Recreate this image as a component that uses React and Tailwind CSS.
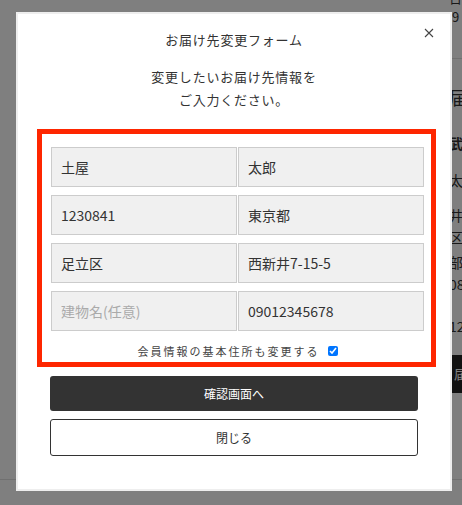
import { useState } from "react";

const fields = [
  { id: "last", value: "土屋" },
  { id: "first", value: "太郎" },
  { id: "zip", value: "1230841" },
  { id: "pref", value: "東京都" },
  { id: "city", value: "足立区" },
  { id: "street", value: "西新井7-15-5" },
  { id: "building", value: "", placeholder: "建物名(任意)" },
  { id: "tel", value: "09012345678" },
];

const BackgroundPage = () => {
  return (
    <div className="flex flex-col">
      <div className="flex flex-col pl-[449px] text-[14px] text-[#333] whitespace-nowrap">
        <p className="-mt-[10px] leading-4 text-[13px]">日本</p>
        <p className="mt-[3px] leading-4 text-[13px]">&nbsp;9</p>
        <div className="mt-[33px] border-t border-[#e0e0e0]" />
        <p className="mt-[26px] text-lg leading-6">届け先</p>
        <p className="mt-6 font-bold leading-5">武次</p>
        <p className="mt-[17px] leading-5">太郎</p>
        <p className="mt-[15px] leading-5">井7</p>
        <p className="mt-[2px] leading-5">区</p>
        <p className="mt-[5px] leading-5">部</p>
        <p className="mt-[2px] leading-5">08</p>
        <p className="mt-[22px] leading-5">12</p>
        <div className="mt-[19px] flex h-[38px] items-center bg-[#222] pl-[5px] text-white text-[13px]">
          届
        </div>
      </div>
      <div className="mt-[86px] border-t border-[#e0e0e0]" />
    </div>
  );
};

export default function App() {
  const [sync, setSync] = useState(true);

  return (
    <div className="relative h-[505px] w-full overflow-hidden bg-white font-['Noto_Sans_CJK_JP','Noto_Sans',sans-serif]">
      <BackgroundPage />

      {/* Overlay */}
      <div className="absolute inset-0 bg-black/50">
        <div className="relative ml-4 mt-3 h-[479px] w-[436px] border-2 border-[#eee] bg-white text-[#333]">
          <button className="absolute right-[16px] top-[14px] p-0" aria-label="閉じる">
            <svg width="10" height="10" viewBox="0 0 10 10" stroke="#444" strokeWidth="1.1" fill="none">
              <path d="M1 1L9 9M9 1L1 9" />
            </svg>
          </button>

          <h2 className="pt-4 text-center text-[13px] leading-5 tracking-[0.06em]">お届け先変更フォーム</h2>
          <p className="mt-[15px] text-center text-[13px] leading-[23px] tracking-[0.06em]">
            変更したいお届け先情報を
            <br />
            ご入力ください。
          </p>

          {/* Highlighted form */}
          <div className="ml-[19px] mt-[18px] w-[399px] border-[5px] border-[#fe2600] pb-px pl-[9px] pr-[7px] pt-[13px]">
            <div className="grid grid-cols-2 gap-x-px gap-y-2">
              {fields.map(({ id, value, placeholder }) => (
                <input
                  key={id}
                  defaultValue={value}
                  placeholder={placeholder}
                  className="h-10 w-full border border-[#ccc] bg-[#f0f0f0] px-[9px] text-[14px] text-[#333] outline-none placeholder:text-[#aaa]"
                />
              ))}
            </div>
            <label className="mt-[10px] flex h-5 items-center justify-center text-[11px] tracking-[2px] text-[#444]">
              会員情報の基本住所も変更する
              <input
                type="checkbox"
                checked={sync}
                onChange={() => setSync(!sync)}
                className="ml-2 h-[10px] w-[10px] accent-[#0075ff]"
              />
            </label>
          </div>

          <div className="ml-8 mt-[9px] flex w-[368px] flex-col gap-2">
            <button className="h-[35px] rounded-[3px] bg-[#333] text-[12px] text-white">確認画面へ</button>
            <button className="h-[37px] rounded-[3px] border border-[#333] bg-white text-[12px] text-[#333]">
              閉じる
            </button>
          </div>
        </div>
      </div>
    </div>
  );
}
